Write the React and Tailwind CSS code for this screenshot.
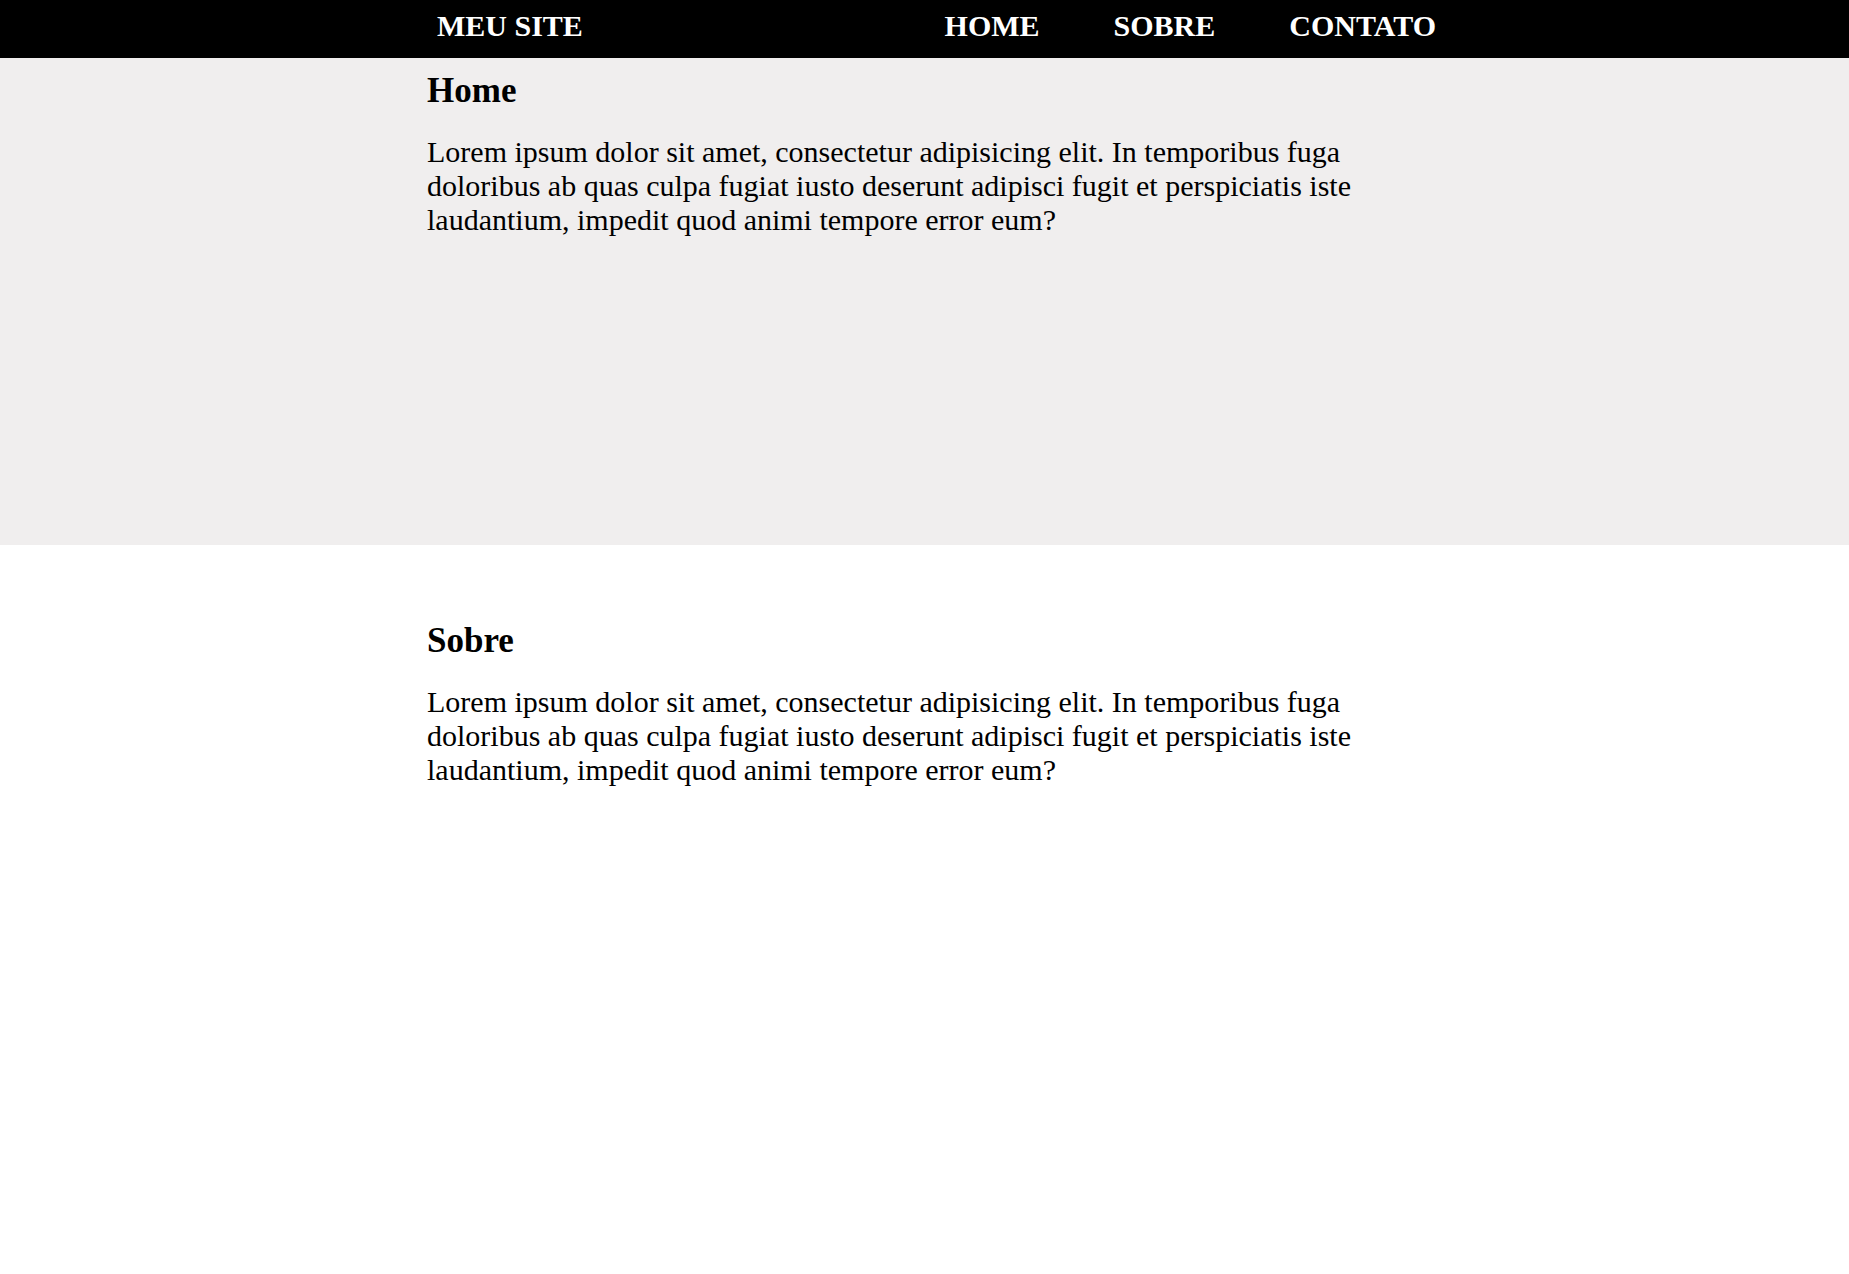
export default function App() {
  const lorem =
    "Lorem ipsum dolor sit amet, consectetur adipisicing elit. In temporibus fuga doloribus ab quas culpa fugiat iusto deserunt adipisci fugit et perspiciatis iste laudantium, impedit quod animi tempore error eum?";
  return (
    <div className="min-h-[1274px] bg-white text-black font-['Liberation_Serif','Times_New_Roman',serif]">
      <header className="h-[58px] bg-black text-white">
        <div className="ml-[437px] w-[999px] h-full pb-[6px] flex items-center justify-between">
          <div className="text-[30px] font-bold leading-none">MEU SITE</div>
          <nav className="flex gap-[74px] text-[30px] font-bold leading-none">
            <a href="#home">HOME</a>
            <a href="#sobre">SOBRE</a>
            <a href="#contato">CONTATO</a>
          </nav>
        </div>
      </header>
      <section id="home" className="h-[487px] bg-[#f0eeee]">
        <div className="ml-[427px] w-[960px] pt-[13px]">
          <h2 className="text-[35px] font-bold leading-[39px]">Home</h2>
          <p className="mt-[25px] text-[30px] leading-[34px]">{lorem}</p>
        </div>
      </section>
      <section id="sobre">
        <div className="ml-[427px] w-[960px] pt-[76px]">
          <h2 className="text-[35px] font-bold leading-[39px]">Sobre</h2>
          <p className="mt-[25px] text-[30px] leading-[34px]">{lorem}</p>
        </div>
      </section>
    </div>
  );
}
